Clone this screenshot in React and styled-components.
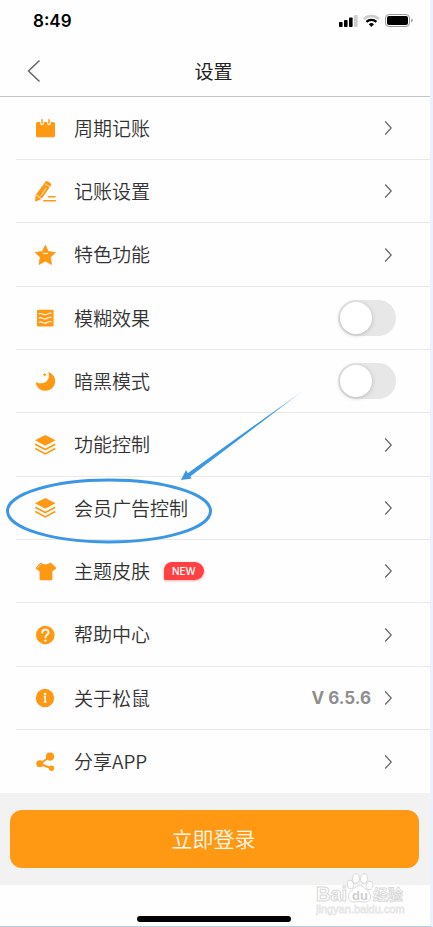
import React from 'react';
import styled, { createGlobalStyle } from 'styled-components';

const ORANGE = '#ff9812';

const icons = {
    calendar: (
        <>
            <rect x="3" y="6" width="19" height="15.3" rx="1.5" fill={ORANGE} />
            <path d="M9 4v3.5M16 4v3.5" stroke="#fff" strokeWidth="3.6" strokeLinecap="round" />
            <path d="M9 3.8v3.5M16 3.8v3.5" stroke={ORANGE} strokeWidth="1.5" strokeLinecap="round" />
        </>
    ),
    pencil: (
        <>
            <path d="M12.2 2.9q1-1.5 2.4-.7l3 2q1.1.9.3 2.2L8.9 19.6 2.9 15.8z" fill={ORANGE} />
            <path d="M2.7 15.6l6.2 4.2-6 2.7q-.9.2-.8-.8z" fill={ORANGE} />
            <path d="M12 4.9l4.8 3.1M13.2 9l-5.4 8M3.2 16.2l5.2 3.5" stroke="#fff" strokeWidth=".8" />
            <path d="M15.5 17.8h6.6M10.8 21.8h11.5" stroke={ORANGE} strokeWidth="1.5" strokeLinecap="round" />
        </>
    ),
    star: (
        <>
            <path
                d="M12.3 2.2l3 6.4 7.2.8-5.2 4.9 1.3 7.2-6.3-3.5L6 21.5l1.3-7.2-5.2-4.9 7.2-.8z"
                fill={ORANGE}
                stroke={ORANGE}
                strokeWidth=".8"
                strokeLinejoin="round"
            />
            <path d="M10.2 10.3q2.2.8 4.4 0" stroke="#fff" strokeWidth="1.1" strokeLinecap="round" />
        </>
    ),
    waves: (
        <>
            <rect x="4" y="3.8" width="16.6" height="16.8" rx="1.3" fill={ORANGE} />
            <path
                d="M6.2 7.8c2.4-1.4 3.6 1.2 6 .9 2.4 0 3.2-2.2 6-1.5M6.2 12c2.4-1.4 3.6 1.2 6 .9 2.4 0 3.2-2.2 6-1.5M6.2 16.2c2.4-1.4 3.6 1.2 6 .9 2.4 0 3.2-2.2 6-1.5"
                stroke="#fff"
                strokeWidth="1.1"
                strokeLinecap="round"
            />
        </>
    ),
    moon: (
        <>
            <path d="M2.5 13A9.9 9.6 0 1 0 15.2 3C17.4 8 14.6 13.6 9.6 14.2 6.6 14.6 4.2 14.2 2.5 13z" fill={ORANGE} />
            <path d="M11.7 3.9l.7 1.2 1.2.7-1.2.7-.7 1.2-.7-1.2-1.2-.7 1.2-.7z" fill={ORANGE} />
        </>
    ),
    layers: (
        <>
            <path d="M12.3 2l10.3 5.3-10.3 5.4L2 7.3z" fill={ORANGE} />
            <path d="M2.3 11.2l10 5.4 10-5.4M2.3 15.5l10 5.4 10-5.4" stroke={ORANGE} strokeWidth="1.7" />
        </>
    ),
    shirt: (
        <>
            <path
                d="M8.2 3.8c2 2 6.6 2 8.6 0q1.2-.1 2 .7l4.1 4q.5.8-.3 1.4l-3.2 2.3v8q0 1-1 1H7.6q-1 0-1-1v-8L3.2 9.9q-.7-.6-.2-1.4l3.6-4q.7-.8 1.6-.7z"
                fill={ORANGE}
            />
            <path d="M4.7 8.6L8 5.2" stroke="#fff" strokeWidth=".9" strokeDasharray="2 1" />
        </>
    ),
    help: (
        <>
            <circle cx="12.3" cy="12" r="9.3" fill={ORANGE} />
            <path
                d="M9.3 9.6c0-4 6.2-3.9 6.2-.2 0 2.3-3.1 2.3-3.1 5"
                stroke="#fff"
                strokeWidth="1.9"
                strokeLinecap="round"
            />
            <circle cx="12.4" cy="17.6" r="1.2" fill="#fff" />
        </>
    ),
    info: (
        <>
            <circle cx="12" cy="12" r="9.2" fill={ORANGE} />
            <circle cx="12" cy="8" r="1.3" fill="#fff" />
            <path d="M10.8 10.6h1.4v5.5M10.8 16h2.8" stroke="#fff" strokeWidth="1.5" />
        </>
    ),
    share: (
        <>
            <path d="M17 6.5L6.8 14l11.6 4.2" stroke={ORANGE} strokeWidth="2" />
            <circle cx="17" cy="6.6" r="4.1" fill={ORANGE} />
            <circle cx="6.8" cy="13.8" r="3.5" fill={ORANGE} />
            <circle cx="18.5" cy="18.2" r="2.7" fill={ORANGE} />
        </>
    ),
};

const items = [
    { icon: 'calendar', label: '周期记账' },
    { icon: 'pencil', label: '记账设置' },
    { icon: 'star', label: '特色功能' },
    { icon: 'waves', label: '模糊效果', toggle: true },
    { icon: 'moon', label: '暗黑模式', toggle: true },
    { icon: 'layers', label: '功能控制' },
    { icon: 'layers', label: '会员广告控制' },
    { icon: 'shirt', label: '主题皮肤', badge: 'NEW' },
    { icon: 'help', label: '帮助中心' },
    { icon: 'info', label: '关于松鼠', value: 'V 6.5.6' },
    { icon: 'share', label: '分享APP' },
];

const Icon = ({ name }) => (
    <svg width="24" height="24" viewBox="0 0 24 24" fill="none" aria-hidden="true">{icons[name]}</svg>
);

const Chevron = () => (
    <svg width="16" height="16" viewBox="0 0 16 16" fill="none" aria-hidden="true">
        <path d="M5.2 1.5L11.2 8l-6 6.5" stroke="#666" strokeWidth="1.2" />
    </svg>
);

const StatusIcons = () => (
    <svg width="76" height="16" viewBox="0 0 76 16" fill="none" aria-hidden="true">
        <g fill="#000">
            <rect x="1" y="9" width="3.6" height="5" rx=".8" />
            <rect x="6" y="7" width="3.6" height="7" rx=".8" />
            <rect x="11" y="4.5" width="3.6" height="9.5" rx=".8" />
        </g>
        <rect x="16" y="2" width="3.6" height="12" rx=".8" fill="#ccc" />
        <path d="M25.8 6.1a10.8 10.8 0 0 1 15.2 0" stroke="#ccc" strokeWidth="2.4" />
        <path d="M28.4 8.9a7.1 7.1 0 0 1 10 0" stroke="#000" strokeWidth="2.2" />
        <path d="M30.8 11.3a3.7 3.7 0 0 1 5.2 0l-2.6 2.7z" fill="#000" />
        <rect x="47.5" y="1.5" width="24" height="12" rx="3.5" stroke="#999" />
        <rect x="49" y="3" width="21" height="9" rx="2" fill="#000" />
        <path d="M73.2 5.5v4q1.5-.5 1.5-2t-1.5-2z" fill="#999" />
    </svg>
);

const App = () => {
    const [on, setOn] = React.useState({})

    const toggle = (label) => setOn({ ...on, [label]: !on[label] })

    return (
        <>
            <Global />
            <Page>
                <StatusBar>
                    <Time>8:49</Time>
                    <StatusIcons />
                </StatusBar>
                <Header>
                    <Back type="button" aria-label="返回">
                        <svg width="14" height="24" viewBox="0 0 14 24" fill="none">
                            <path d="M12.5 1.5L1.5 12l11 10.5" stroke="#666" strokeWidth="1.5" />
                        </svg>
                    </Back>
                    <Title>设置</Title>
                </Header>
                <ListArea>
                    <List>
                        {items.map(item => (
                            <Item key={item.label}>
                                {item.toggle ?
                                    <Row as="label">
                                        <Icon name={item.icon} />
                                        <Label>{item.label}</Label>
                                        <End>
                                            <Switch
                                                type="checkbox"
                                                role="switch"
                                                checked={!!on[item.label]}
                                                onChange={() => toggle(item.label)}
                                            />
                                        </End>
                                    </Row>
                                    :
                                    <Row type="button">
                                        <Icon name={item.icon} />
                                        <Label>{item.label}</Label>
                                        {item.badge && <Badge>{item.badge}</Badge>}
                                        <End>
                                            {item.value && <Value>{item.value}</Value>}
                                            <Chevron />
                                        </End>
                                    </Row>
                                }
                            </Item>
                        ))}
                    </List>
                    <Annotation width="310" height="170" viewBox="0 0 310 170" fill="none" aria-hidden="true">
                        <defs>
                            <linearGradient id="fade" x1="181" y1="95" x2="304" y2="5" gradientUnits="userSpaceOnUse">
                                <stop offset=".7" stopColor="#3b96e6" />
                                <stop offset="1" stopColor="#3b96e6" stopOpacity=".4" />
                            </linearGradient>
                        </defs>
                        <ellipse cx="109" cy="126" rx="101.5" ry="31" stroke="#3b96e6" strokeWidth="3" />
                        <path d="M181 95l5-10 1.7 3.2L304 5 190.2 91.6l1.6 1.9z" fill="url(#fade)" />
                    </Annotation>
                </ListArea>
                <Footer>
                    <Login type="button">立即登录</Login>
                </Footer>
                <Home>
                    <Indicator />
                </Home>
                <Watermark width="96" height="46" viewBox="0 0 96 46" role="img" aria-label="Baidu 经验">
                    <g fill="#fff" stroke="#d9d9d9" strokeWidth="1">
                        <text x="3" y="29" fontSize="20" fontWeight="700">Bai</text>
                        <ellipse cx="37.5" cy="12.5" rx="3.2" ry="4.3" transform="rotate(-15 37.5 12.5)" />
                        <ellipse cx="43" cy="6.5" rx="3.4" ry="4.7" />
                        <ellipse cx="51" cy="6.5" rx="3.4" ry="4.7" transform="rotate(8 51 6.5)" />
                        <ellipse cx="56.5" cy="13.5" rx="3.2" ry="4.3" transform="rotate(20 56.5 13.5)" />
                        <path d="M46.5 13.5c4 0 5.5 3.5 8 5.5 5.5 4.5 3 11-2.5 11-2 0-3.500-.5-5.500-.5s-3.500.5-5.500.5c-5.500 0-8-6.500-2.500-11 2.500-2 4-5.500 8-5.500z" />
                        <text x="60" y="28" fontSize="15" fontWeight="700" strokeWidth=".8">经验</text>
                    </g>
                    <text x="39" y="28" fontSize="13" fontWeight="700" fill="#cfcfcf">du</text>
                    <text x="3" y="41" fontSize="11" fill="#fff" stroke="#e6e6e6" strokeWidth=".8">jingyan.baidu.com</text>
                </Watermark>
            </Page>
        </>
    );
};

export default App;

const Global = createGlobalStyle`
    *{
        box-sizing:border-box;
    }
    body{
        margin:0;
        background:#fff;
        font-family:"Noto Sans CJK SC", sans-serif;
        font-weight:350;
    }
    button{
        border:0;
        padding:0;
        background:none;
        font:inherit;
        color:inherit;
        cursor:pointer;
    }
    svg{
        display:block;
        flex:none;
    }
`

const Page = styled.div`
    position:relative;
    display:flex;
    flex-direction:column;
    min-height:100vh;
    background:#fefefe;
    border-right:3px solid #eaf2fd;
    border-bottom:1px solid #b8cfe6;
`

const StatusBar = styled.div`
    display:flex;
    align-items:center;
    justify-content:space-between;
    height:42px;
    padding:0 16px 0 33px;
`

const Time = styled.div`
    font-family:Inter, sans-serif;
    font-size:17px;
    font-weight:600;
    color:#000;
`

const Header = styled.header`
    display:grid;
    grid-template-columns:48px 1fr 48px;
    align-items:center;
    height:55px;
    padding-right:3px;
    padding-bottom:1px;
    border-bottom:1px solid #c4c4c4;
`

const Back = styled.button`
    display:flex;
    align-items:center;
    height:48px;
    padding-left:27px;
    padding-top:4px;
`

const Title = styled.h1`
    margin:0;
    padding-top:4px;
    font-size:19px;
    font-weight:400;
    line-height:28px;
    text-align:center;
    color:#222;
`

const ListArea = styled.div`
    position:relative;
`

const List = styled.ul`
    margin:0;
    padding:0 0 0 16px;
    list-style:none;
`

const Item = styled.li`
    display:flex;
    height:63px;
    border-bottom:1px solid #e8e8e8;
    &:nth-child(3n){
        height:64px;
    }
    &:last-child{
        border-bottom:0;
    }
`

const Row = styled.button`
    display:flex;
    align-items:center;
    width:100%;
    padding:0 34px 0 17px;
    text-align:left;
    cursor:pointer;
`

const Label = styled.span`
    margin-left:17px;
    padding-bottom:1px;
    font-size:19px;
    line-height:28px;
    color:#333;
`

const Badge = styled.span`
    margin-left:14px;
    padding:0 8px;
    border-radius:8px 9px 9px 1px;
    background:#ff4144;
    box-shadow:0 1px 3px rgba(255, 65, 68, .4);
    font-family:Inter, sans-serif;
    font-size:10px;
    font-weight:500;
    line-height:18px;
    color:#fff;
`

const End = styled.span`
    display:flex;
    align-items:center;
    gap:9px;
    margin-left:auto;
`

const Value = styled.span`
    font-family:Inter, sans-serif;
    font-size:17px;
    font-weight:700;
    line-height:24px;
    color:#8e8e8e;
`

const Switch = styled.input`
    appearance:none;
    display:flex;
    align-items:center;
    width:58px;
    height:36px;
    margin:0;
    padding:0 2px;
    border-radius:18px;
    background:${prop => prop.checked ? ORANGE : '#e7e7e7'};
    cursor:pointer;
    &::before{
        content:"";
        width:32px;
        height:32px;
        margin-left:${prop => prop.checked ? 'auto' : '0'};
        border-radius:50%;
        background:#fff;
        box-shadow:0 1px 5px rgba(0, 0, 0, .2);
    }
`

const Annotation = styled.svg`
    position:absolute;
    left:0;
    top:288px;
    pointer-events:none;
`

const Footer = styled.div`
    padding:17px 11px 17px 10px;
    background:#f2f2f2;
`

const Login = styled.button`
    display:block;
    width:100%;
    height:58px;
    padding:0 2px 2px 0;
    border-radius:12px;
    background:${ORANGE};
    font-size:21px;
    line-height:30px;
    color:#fff8ee;
`

const Home = styled.div`
    display:flex;
    flex:1;
    align-items:flex-end;
    justify-content:center;
    min-height:41px;
    padding:0 2px 4px 0;
`

const Indicator = styled.div`
    width:154px;
    height:6px;
    border-radius:3px;
    background:#000;
`

const Watermark = styled.svg`
    position:absolute;
    right:21px;
    bottom:8px;
    font-family:"Liberation Sans", "Noto Sans CJK SC", sans-serif;
    pointer-events:none;
`
